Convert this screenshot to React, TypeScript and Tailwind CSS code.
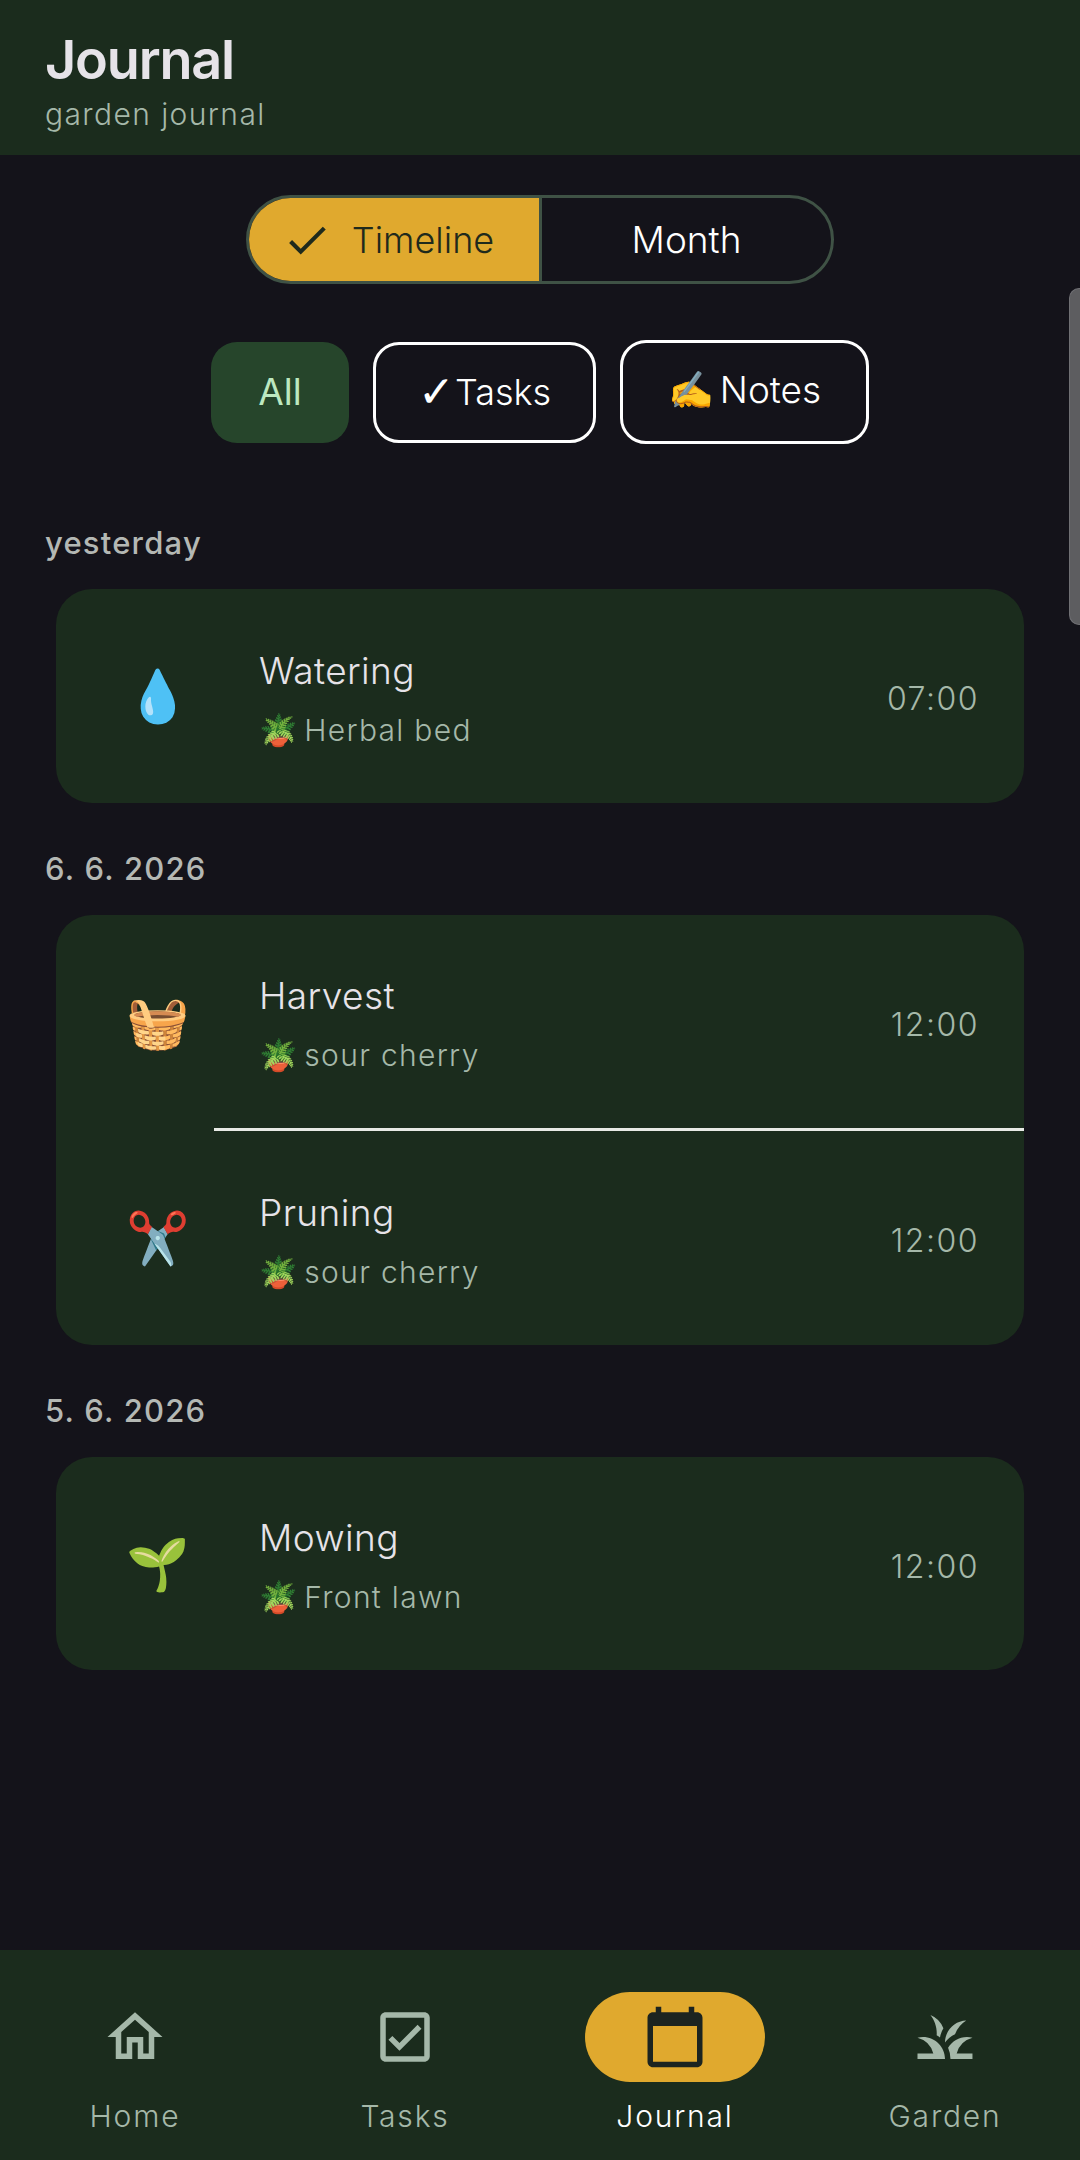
import { MdCalendarToday, MdCheck, MdGrass, MdOutlineCheckBox, MdOutlineHome } from 'react-icons/md'

const sections = [
  {
    label: 'yesterday',
    rows: [{ icon: '💧', title: 'Watering', place: 'Herbal bed', time: '07:00' }],
  },
  {
    label: '6. 6. 2026',
    rows: [
      { icon: '🧺', title: 'Harvest', place: 'sour cherry', time: '12:00' },
      { icon: '✂️', title: 'Pruning', place: 'sour cherry', time: '12:00' },
    ],
  },
  {
    label: '5. 6. 2026',
    rows: [{ icon: '🌱', title: 'Mowing', place: 'Front lawn', time: '12:00' }],
  },
]

const tabs = [
  { label: 'Home', Icon: MdOutlineHome },
  { label: 'Tasks', Icon: MdOutlineCheckBox },
  { label: 'Journal', Icon: MdCalendarToday, active: true },
  { label: 'Garden', Icon: MdGrass },
]

export default function App() {
  return (
    <div className="relative flex h-[2160px] w-[1080px] flex-col overflow-hidden bg-[#14131a] font-['Inter',sans-serif]">
      <header className="flex h-[155px] flex-col bg-[#1b2c1d] pl-[45px] pt-[27px]">
        <h1 className="text-[54px] leading-[66px] font-semibold tracking-[-1.2px] text-[#e6e3e8]">Journal</h1>
        <p className="mt-[2px] text-[30px] leading-[38px] font-light tracking-[1.4px] text-[#a5b8a9]">garden journal</p>
      </header>

      <main className="flex-1">
        <div className="mt-[40px] flex justify-center">
          <div className="flex h-[89px] w-[588px] overflow-hidden rounded-full border-[3px] border-[#3f5245]">
            <div className="flex w-[293px] items-center justify-center gap-[20px] border-r-[3px] border-[#3f5245] bg-[#e0a92e] pr-[4px] text-[36px] font-light text-[#1f2a1c]">
              <MdCheck size={50} className="-ml-[8px]" />
              <span>Timeline</span>
            </div>
            <div className="flex flex-1 items-center justify-center text-[37px] font-light text-white">Month</div>
          </div>
        </div>

        <div className="mt-[56px] flex items-center justify-center gap-[24px]">
          <div className="flex h-[101px] w-[138px] items-center justify-center rounded-[26px] bg-[#26452b] text-[37px] text-[#bde8c0]">
            All
          </div>
          <div className="flex h-[101px] w-[223px] items-center justify-center rounded-[26px] border-[3px] border-white text-[36px] font-light text-white">
            <span className="font-['DejaVu_Sans',sans-serif] text-[44px] leading-none">✓</span>
            <span>Tasks</span>
          </div>
          <div className="flex h-[104px] w-[249px] items-center justify-center gap-[6px] rounded-[26px] border-[3px] border-white pb-[4px] text-[37px] font-light text-white">
            <span>✍️</span>
            <span>Notes</span>
          </div>
        </div>

        <div className="mt-[79px] flex flex-col">
          {sections.map((section) => (
            <section key={section.label} className="mb-[46px] flex flex-col">
              <h2 className="pl-[45px] text-[31px] leading-[40px] font-medium tracking-[1.2px] text-[#b4b8b4]">{section.label}</h2>
              <div className="mx-[56px] mt-[26px] rounded-[36px] bg-[#1b2c1d]">
                {section.rows.map((row, i) => (
                  <div key={row.title}>
                    {i > 0 && <div className="ml-[158px] h-[3px] bg-[#e8eae6]" />}
                    <div className="flex h-[213.5px] items-center pr-[45px]">
                      <div className="flex w-[203px] justify-center text-[51px] leading-none">{row.icon}</div>
                      <div className="flex-1 pt-[6px]">
                        <div className="text-[37px] leading-[46px] font-light tracking-[0.4px] text-[#e6e3e8]">{row.title}</div>
                        <div className="mt-[16px] flex items-center gap-[5px] text-[30px] leading-[40px] font-light tracking-[1.3px] text-[#a5b8a9]">
                          <span className="text-[31px]">🪴</span>
                          <span>{row.place}</span>
                        </div>
                      </div>
                      <div className="pt-[7px] text-[32px] font-light tracking-[1.5px] text-[#a5b8a9]">{row.time}</div>
                    </div>
                  </div>
                ))}
              </div>
            </section>
          ))}
        </div>
      </main>

      <nav className="flex h-[210px] bg-[#1b2c1d]">
        {tabs.map(({ label, Icon, active }) => (
          <div key={label} className="flex w-[270px] flex-col items-center pt-[42px]">
            <div className={`flex h-[90px] w-[180px] items-center justify-center rounded-full ${active ? 'bg-[#e0a92e] text-[#1c2420]' : 'text-[#a5b8a9]'}`}>
              <Icon size={66} />
            </div>
            <div className={`mt-[14px] text-[30px] leading-[40px] font-light tracking-[1.8px] ${active ? 'text-white' : 'text-[#a5b8a9]'}`}>{label}</div>
          </div>
        ))}
      </nav>

      <div className="absolute right-0 top-[288px] h-[337px] w-[11px] rounded-l-[10px] border-y border-l border-[#707074] bg-[#5d5d60]" />
    </div>
  )
}
